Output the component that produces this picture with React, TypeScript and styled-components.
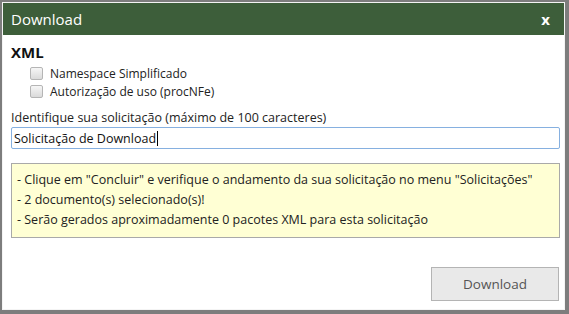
import React from "react";
import styled, { createGlobalStyle } from "styled-components";

const GlobalStyle = createGlobalStyle`
  html, body {
    margin: 0;
    padding: 0;
    background: #7d7d7d;
    font-family: "Open Sans", "Liberation Sans", sans-serif;
  }
`;

const Overlay = styled.div`
  width: 569px;
  height: 314px;
  padding: 2px 4px 4px 2px;
  box-sizing: border-box;
`;

const Dialog = styled.div`
  width: 100%;
  height: 100%;
  background: #fff;
  border: 1px solid #f4f4f4;
  box-sizing: border-box;
  display: flex;
  flex-direction: column;
`;

const Header = styled.div`
  height: 32px;
  background: #3d5e3a;
  color: #fff;
  display: flex;
  align-items: center;
  justify-content: space-between;
  padding: 0 14px 0 8px;
  font-size: 15px;
`;

const Close = styled.span`
  font-weight: bold;
  font-size: 15px;
  line-height: 1;
`;

const Body = styled.div`
  flex: 1;
  padding: 7px 4px 0 8px;
  display: flex;
  flex-direction: column;
  font-size: 12px;
  color: #222;
`;

const Section = styled.div`
  font-weight: bold;
  font-size: 15px;
  color: #111;
  line-height: 20px;
`;

const CheckRow = styled.label`
  display: flex;
  align-items: center;
  gap: 7px;
  padding-left: 19px;
  height: 18px;
  &:first-of-type {
    margin-top: 2px;
  }
`;

const Check = styled.span`
  width: 11px;
  height: 11px;
  border: 1px solid #b5b5b5;
  border-radius: 2px;
  background: linear-gradient(#f6f6f6, #dadada);
`;

const FieldLabel = styled.div`
  margin-top: 10px;
  line-height: 16px;
  font-size: 12.5px;
`;

const Input = styled.div`
  height: 22px;
  margin-top: 1px;
  border: 1px solid #86b0e0;
  border-radius: 2px;
  box-sizing: border-box;
  display: flex;
  align-items: center;
  padding-left: 2px;
  font-size: 12.5px;
  color: #111;
`;

const Caret = styled.span`
  display: inline-block;
  width: 1px;
  height: 15px;
  background: #000;
  margin-left: 1px;
`;

const Notice = styled.div`
  margin-top: 14px;
  box-sizing: border-box;
  background: #ffffd4;
  border: 1px solid #a9a9a9;
  padding: 6px 5px 7px;
  display: flex;
  flex-direction: column;
  line-height: 20px;
  font-size: 12.5px;
`;

const Footer = styled.div`
  margin-top: auto;
  display: flex;
  justify-content: flex-end;
  padding: 0 1px 8px 0;
`;

const Button = styled.button`
  width: 128px;
  height: 34px;
  background: #e9e9e9;
  border: 1px solid #b4b4b4;
  color: #555;
  font-family: inherit;
  font-size: 13.5px;
`;

export default function App() {
  return (
    <>
      <GlobalStyle />
      <Overlay>
        <Dialog>
          <Header>
            <span>Download</span>
            <Close>x</Close>
          </Header>
          <Body>
            <Section>XML</Section>
            <CheckRow>
              <Check />
              Namespace Simplificado
            </CheckRow>
            <CheckRow>
              <Check />
              Autorização de uso (procNFe)
            </CheckRow>
            <FieldLabel>Identifique sua solicitação (máximo de 100 caracteres)</FieldLabel>
            <Input>
              Solicitação de Download
              <Caret />
            </Input>
            <Notice>
              <div>- Clique em "Concluir" e verifique o andamento da sua solicitação no menu "Solicitações"</div>
              <div>- 2 documento(s) selecionado(s)!</div>
              <div>- Serão gerados aproximadamente 0 pacotes XML para esta solicitação</div>
            </Notice>
            <Footer>
              <Button>Download</Button>
            </Footer>
          </Body>
        </Dialog>
      </Overlay>
    </>
  );
}
